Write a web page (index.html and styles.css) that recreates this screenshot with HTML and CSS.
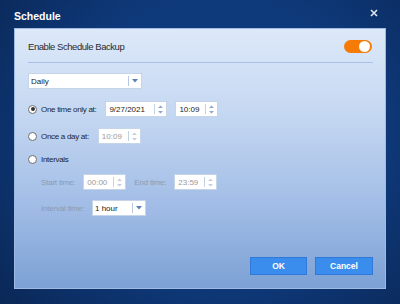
FILE: index.html
```html
<!DOCTYPE html>
<html>
<head>
<meta charset="utf-8">
<link rel="stylesheet" href="styles.css">
</head>
<body>
<div class="window">
  <div class="titlebar">
    <span class="title">Schedule</span>
    <svg class="close" width="8" height="8" viewBox="0 0 8 8"><path d="M1 1L7 7M7 1L1 7" stroke="#dfe6f2" stroke-width="1.6"/></svg>
  </div>
  <div class="panel">
    <div class="header">
      <span class="header-label">Enable Schedule Backup</span>
      <span class="toggle"><span class="knob"></span></span>
    </div>
    <div class="select select-main">
      <span class="select-text">Daily</span>
      <span class="select-btn"><svg width="6" height="4" viewBox="0 0 6 4"><path d="M0 0H6L3 3.5Z" fill="#5b80b8"/></svg></span>
    </div>

    <div class="row row-one">
      <span class="radio checked"></span>
      <span class="label">One time only at:</span>
      <span class="spin w-date"><span class="spin-text">9/27/2021</span><span class="spin-btn"><svg width="5" height="9" viewBox="0 0 5 9"><path d="M0 3L2.5 0.5L5 3Z M0 6L2.5 8.5L5 6Z" fill="#90a6c6"/></svg></span></span>
      <span class="spin w-time gap8"><span class="spin-text">10:09</span><span class="spin-btn"><svg width="5" height="9" viewBox="0 0 5 9"><path d="M0 3L2.5 0.5L5 3Z M0 6L2.5 8.5L5 6Z" fill="#90a6c6"/></svg></span></span>
    </div>

    <div class="row row-two">
      <span class="radio"></span>
      <span class="label">Once a day at:</span>
      <span class="spin w-time disabled"><span class="spin-text">10:09</span><span class="spin-btn"><svg width="5" height="9" viewBox="0 0 5 9"><path d="M0 3L2.5 0.5L5 3Z M0 6L2.5 8.5L5 6Z" fill="#c4cfdd"/></svg></span></span>
    </div>

    <div class="row row-three">
      <span class="radio"></span>
      <span class="label">Intervals</span>
    </div>

    <div class="row row-sub">
      <span class="sublabel">Start time:</span>
      <span class="spin w-time disabled"><span class="spin-text">00:00</span><span class="spin-btn"><svg width="5" height="9" viewBox="0 0 5 9"><path d="M0 3L2.5 0.5L5 3Z M0 6L2.5 8.5L5 6Z" fill="#c4cfdd"/></svg></span></span>
      <span class="sublabel end-label">End time:</span>
      <span class="spin w-time disabled"><span class="spin-text">23:59</span><span class="spin-btn"><svg width="5" height="9" viewBox="0 0 5 9"><path d="M0 3L2.5 0.5L5 3Z M0 6L2.5 8.5L5 6Z" fill="#c4cfdd"/></svg></span></span>
    </div>

    <div class="row row-sub2">
      <span class="sublabel">Interval time:</span>
      <span class="select select-small">
        <span class="select-text">1 hour</span>
        <span class="select-btn"><svg width="6" height="4" viewBox="0 0 6 4"><path d="M0 0H6L3 3.5Z" fill="#5b80b8"/></svg></span>
      </span>
    </div>

    <div class="buttons">
      <button class="btn btn-ok">OK</button>
      <button class="btn">Cancel</button>
    </div>
  </div>
</div>
</body>
</html>
```

FILE: styles.css
```css
html, body {
  margin: 0;
  padding: 0;
}
body {
  width: 400px;
  height: 304px;
  overflow: hidden;
  font-family: "Liberation Sans", Arial, sans-serif;
}
.window {
  width: 400px;
  height: 304px;
  background: radial-gradient(ellipse 75% 90% at 55% 45%, #10438a 0%, #0e3878 55%, #0a2653 100%);
  display: flex;
  flex-direction: column;
}
.titlebar {
  height: 28px;
  display: flex;
  align-items: center;
  justify-content: space-between;
  padding: 2px 22px 0 14px;
  box-sizing: border-box;
}
.title {
  color: #ffffff;
  font-weight: bold;
  font-size: 10.5px;
  margin-top: 2px;
}
.close {
  display: block;
  margin-top: -4px;
}
.panel {
  margin: 0 14px;
  height: 261px;
  box-sizing: border-box;
  border: 1px solid #9fbbe3;
  background: linear-gradient(to bottom, #dde9f9 0%, #c3d6f1 35%, #9fbbe5 70%, #7ca1d4 100%);
  padding: 0 12px 0 13px;
  display: flex;
  flex-direction: column;
  align-items: flex-start;
}
.header {
  align-self: stretch;
  height: 34px;
  padding-top: 2px;
  box-sizing: border-box;
  display: flex;
  align-items: center;
  justify-content: space-between;
  border-bottom: 1px solid #a5c1ea;
}
.header-label {
  font-size: 9.5px;
  letter-spacing: -0.45px;
  color: #2b2b2b;
}
.toggle {
  width: 28px;
  height: 13px;
  border-radius: 7px;
  background: #f57a06;
  position: relative;
  margin-right: 1px;
}
.knob {
  position: absolute;
  right: 2px;
  top: 1px;
  width: 11px;
  height: 11px;
  border-radius: 50%;
  background: #ffffff;
}
.select {
  display: flex;
  height: 16px;
  box-sizing: border-box;
  background: #ffffff;
  border: 1px solid #c6d4e8;
  align-items: stretch;
}
.select-main {
  width: 114px;
  margin-top: 10px;
}
.select-text {
  flex: 1;
  font-size: 8px;
  color: #222;
  padding-left: 2px;
  display: flex;
  align-items: center;
}
.select-btn {
  width: 12px;
  border-left: 1px solid #b7c8e0;
  margin: 2px 0;
  display: flex;
  align-items: center;
  justify-content: center;
}
.row {
  display: flex;
  align-items: center;
  height: 16px;
}
.row-one { margin-top: 12px; }
.row-two { margin-top: 11px; }
.row-three { margin-top: 7px; }
.row-sub { margin-top: 7px; padding-left: 13px; }
.row-sub2 { margin-top: 10px; padding-left: 13px; }
.radio {
  width: 9px;
  height: 9px;
  box-sizing: border-box;
  border: 1px solid #6d6d6d;
  border-radius: 50%;
  background: #ffffff;
  margin-left: 0;
  position: relative;
}
.radio.checked::after {
  content: "";
  position: absolute;
  left: 1.5px;
  top: 1.5px;
  width: 4px;
  height: 4px;
  border-radius: 50%;
  background: #333;
}
.label {
  font-size: 8px;
  letter-spacing: -0.3px;
  color: #1f1f1f;
  margin-left: 4px;
  margin-right: 9px;
}
.sublabel {
  font-size: 8px;
  letter-spacing: -0.2px;
  color: #8c9bb3;
  margin-right: 8px;
}
.end-label {
  margin-left: 8px;
}
.spin {
  display: flex;
  height: 16px;
  box-sizing: border-box;
  background: #ffffff;
  border: 1px solid #c6d4e8;
}
.w-date { width: 62px; }
.w-time { width: 43px; }
.gap8 { margin-left: 8px; }
.spin-text {
  flex: 1;
  font-size: 8px;
  color: #222;
  padding-left: 3px;
  display: flex;
  align-items: center;
}
.disabled .spin-text {
  color: #9a9a9a;
}
.spin-btn {
  width: 11px;
  border-left: 1px solid #c3d1e4;
  margin: 2px 0;
  display: flex;
  align-items: center;
  justify-content: center;
}
.select-small {
  width: 54px;
}
.buttons {
  align-self: stretch;
  display: flex;
  justify-content: flex-end;
  gap: 8px;
  margin-top: 41px;
}
.btn {
  width: 58px;
  height: 18px;
  padding: 0;
  border: 1px solid #2f7ad8;
  background: #3a8ded;
  color: #ffffff;
  font-family: "Liberation Sans", Arial, sans-serif;
  font-weight: bold;
  font-size: 8.5px;
}
.btn-ok {
  width: 57px;
}
```
